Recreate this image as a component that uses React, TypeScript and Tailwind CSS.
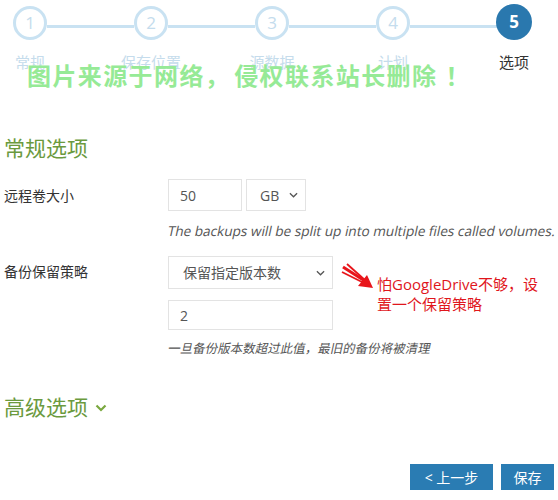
import React from "react";

const font = { fontFamily: '"Open Sans", "Noto Sans CJK SC", sans-serif' };

function Chevron({ className }: { className?: string }) {
  return (
    <svg className={className} viewBox="0 0 10 6" width="9" height="6" fill="none">
      <path d="M1 1 L5 5 L9 1" stroke="currentColor" strokeWidth="1.4" />
    </svg>
  );
}

const steps = ["常规", "保存位置", "源数据", "计划", "选项"];

export default function App() {
  return (
    <div
      className="relative w-[558px] h-[500px] overflow-hidden bg-white pl-[4px] pr-[4px] text-[#333]"
      style={font}
    >
      {/* Steps */}
      <div className="flex w-[544px] pt-[4px] -ml-[4px]">
        {steps.map((s, i) => (
          <React.Fragment key={s}>
            {i > 0 && (
              <div className="flex-1 h-[3px] bg-[#c9e2f2] mt-[21px] -mx-[13px]" />
            )}
            <div className="relative z-10 flex w-[60px] flex-col items-center">
              {i < 4 ? (
                <div className="mt-[2px] flex h-[34px] w-[34px] items-center justify-center rounded-full border-[3px] border-[#c9e2f2] bg-white text-[17px] text-[#c4dced]">
                  {i + 1}
                </div>
              ) : (
                <div className="flex h-[36px] w-[36px] items-center justify-center rounded-full bg-[#2a78ae] text-[17px] font-bold text-white">
                  5
                </div>
              )}
              <div
                className={`mt-[12px] whitespace-nowrap text-[15px] leading-[20px] ${
                  i < 4 ? "text-[#c5dcec]" : "text-[#333]"
                }`}
              >
                {s}
              </div>
            </div>
          </React.Fragment>
        ))}
      </div>

      {/* Watermark */}
      <div className="absolute z-20 left-[27px] top-[61px] whitespace-nowrap text-[24px] font-bold leading-[30px] tracking-[1.4px] text-[#96ea96]">
        图片来源于网络，<span className="ml-[4px]">侵权联系站长删除</span>
        <span className="ml-[8px]">！</span>
      </div>

      {/* General options */}
      <div className="mt-[61px] text-[21px] leading-[30px] text-[#6b9a3e]">常规选项</div>

      <div className="mt-[16px] flex h-[32px] items-center">
        <div className="w-[164px] text-[14px]">远程卷大小</div>
        <div className="flex h-[32px] w-[74px] items-center border border-[#e3e3e3] pl-[11px] text-[14px] text-[#555]">
          50
        </div>
        <div className="ml-[4px] flex h-[32px] w-[60px] items-center justify-between border border-[#e3e3e3] pl-[13px] pr-[7px] text-[14px] text-[#555]">
          <span>GB</span>
          <Chevron className="text-[#555]" />
        </div>
      </div>
      <div className="mt-[10px] pl-[164px] whitespace-nowrap text-[13.6px] leading-[20px] text-[#555]">
        <span className="inline-block -skew-x-12">
          The backups will be split up into multiple files called volumes. If a volume
        </span>
      </div>

      <div className="mt-[15px] flex">
        <div className="w-[164px] pt-[6px] text-[14px] leading-[20px]">备份保留策略</div>
        <div className="flex flex-col">
          <div className="flex h-[33px] w-[165px] items-center justify-between border border-[#e3e3e3] pl-[14px] pr-[7px] text-[14px] text-[#555]">
            <span>保留指定版本数</span>
            <Chevron className="text-[#555]" />
          </div>
          <div className="mt-[11px] flex h-[30px] w-[165px] items-center border border-[#e3e3e3] pl-[11px] text-[14px] text-[#555]">
            2
          </div>
        </div>
      </div>
      <div className="mt-[9px] pl-[164px] whitespace-nowrap text-[12.5px] leading-[20px] text-[#555]">
        <span className="inline-block -skew-x-12">一旦备份版本数超过此值，最旧的备份将被清理</span>
      </div>

      {/* Advanced */}
      <div className="mt-[33px] flex items-center text-[21px] leading-[30px] text-[#6b9a3e]">
        <span>高级选项</span>
        <svg className="ml-[7px] mt-[2px]" width="12" height="8" viewBox="0 0 12 8" fill="none">
          <path d="M1.5 1.5 L6 6 L10.5 1.5" stroke="#7aa83f" strokeWidth="2.2" />
        </svg>
      </div>

      <div className="mt-[42px] flex justify-end gap-[8px]">
        <button className="flex h-[26px] w-[83px] items-center justify-center bg-[#2a7cb3] text-[14px] text-white">
          &lt; 上一步
        </button>
        <button className="flex h-[26px] w-[53px] items-center justify-center bg-[#2a7cb3] text-[14px] text-white">
          保存
        </button>
      </div>

      {/* Red annotation */}
      <svg className="absolute left-[340px] top-[262px]" width="34" height="28" viewBox="0 0 34 28" fill="none">
        <path d="M3 5 L28 21" stroke="#e8151b" strokeWidth="3" />
        <path d="M2 10 L26 22" stroke="#e8151b" strokeWidth="1.8" />
        <path d="M7 2 L26 19" stroke="#e8151b" strokeWidth="1.8" />
        <path d="M33 26 L18 24 L27 13 Z" fill="#e8151b" />
      </svg>
      <div className="absolute left-[377px] top-[274px] text-[15px] leading-[20px] text-[#e0161c]">
        <div>怕GoogleDrive不够，设</div>
        <div>置一个保留策略</div>
      </div>
    </div>
  );
}
